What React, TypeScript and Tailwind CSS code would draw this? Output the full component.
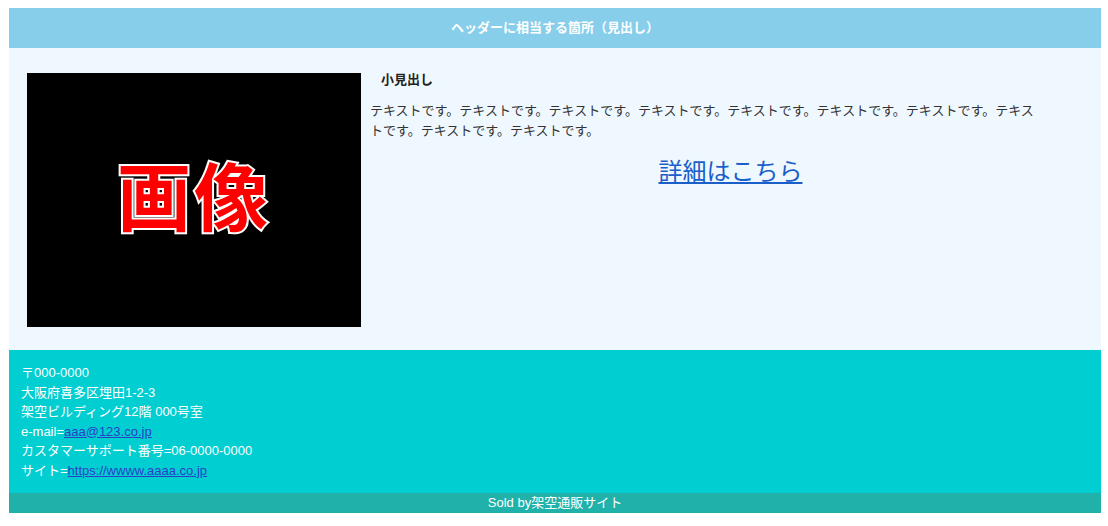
import React from 'react';

const font = 'font-["Liberation_Sans","Noto_Sans_CJK_JP",sans-serif]';

const App: React.FC = () => {
  return (
    <div className={`bg-white pt-2 pb-[13px] pl-[9px] pr-[7px] ${font}`}>
      {/* Header */}
      <header className="h-10 bg-[#87ceeb] flex items-center justify-center">
        <h1 className="text-[13px] font-bold text-white">ヘッダーに相当する箇所（見出し）</h1>
      </header>

      {/* Main */}
      <main className="bg-[#f0f8ff] flex pl-[18px] pr-[10px] pt-[25px] pb-[23px] h-[302px]">
        <div className="w-[334px] h-[254px] bg-black flex items-center justify-center shrink-0">
          <span className="text-[74px] leading-none font-bold text-[#ff0000] [-webkit-text-stroke:4px_white] [paint-order:stroke_fill] tracking-[3px]">
            画像
          </span>
        </div>
        <div className="flex-1 pl-[9px] -mt-[3px]">
          <h2 className="text-[13px] font-bold text-[#222] leading-5 pl-[11px]">小見出し</h2>
          <p className="text-[13px] leading-5 text-[#333] mt-[11px] w-[670px]">
            テキストです。テキストです。テキストです。テキストです。テキストです。テキストです。テキストです。テキストです。テキストです。テキストです。
          </p>
          <div className="text-center mt-[15px]">
            <a href="#" className="text-[24px] leading-8 text-[#1a5fc9] underline">
              詳細はこちら
            </a>
          </div>
        </div>
      </main>

      {/* Footer */}
      <footer className="bg-[#00ced1] px-3 py-[13px] text-white text-[13px] leading-[19.5px]">
        <div>〒000-0000</div>
        <div>大阪府喜多区埋田1-2-3</div>
        <div>架空ビルディング12階 000号室</div>
        <div>
          e-mail=<a href="#" className="text-[#2a3fc8] underline">aaa@123.co.jp</a>
        </div>
        <div>カスタマーサポート番号=06-0000-0000</div>
        <div>
          サイト=<a href="#" className="text-[#2a3fc8] underline">https://wwww.aaaa.co.jp</a>
        </div>
      </footer>
      <div className="bg-[#20b2aa] h-5 flex items-center justify-center text-white text-[13px]">
        Sold by架空通販サイト
      </div>
    </div>
  );
};

export default App;
